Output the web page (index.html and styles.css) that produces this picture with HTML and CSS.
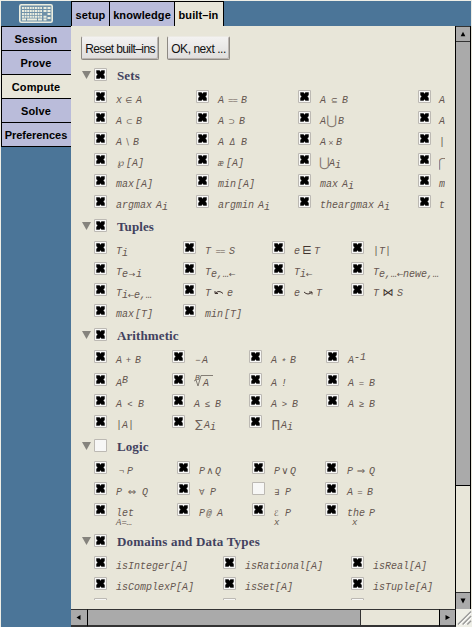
FILE: index.html
```html
<!DOCTYPE html>
<html lang="en">
<head>
<meta charset="utf-8">
<title>Built-ins</title>
<link rel="stylesheet" href="styles.css">
</head>
<body>
<svg class="defs" width="0" height="0"><defs>
<symbol id="x" viewBox="0 0 13 13"><path d="M2.500 2.500h3l1 1.500 1-1.500h3v2.500l-1.200 1.500 1.200 1.500v2.500h-3l-1-1.500-1 1.500h-3V8l1.200-1.500L2.500 5z" fill="#000" stroke="#000" stroke-width=".4"/></symbol>
</defs></svg>
<div class="window">
<header class="top">
<div class="logo"><svg width="34" height="19" viewBox="0 0 34 19"><rect x=".8" y=".8" width="32.4" height="17.4" rx="1.5" fill="#6f91a8" stroke="#eceee0" stroke-width="1.6"/><g stroke="#eceee0" stroke-width="2.100" fill="none"><path d="M3 4h20" stroke-dasharray="1.9 .7"/><path d="M3 7h20" stroke-dasharray="2 .6"/><path d="M3 10h20" stroke-dasharray="1.9 .7"/><path d="M3 12.800h20" stroke-dasharray="2 .6"/><path d="M3 15.500h4M8 15.500h10M19 15.500h4M24.500 15.500h3M24.500 12.800h3M24.500 7h3M24.500 4h3M28.500 4h3M28.500 7h3M28.500 10h3M28.500 14h3"/></g></svg></div>
<nav class="tabs"><a class="t1">setup</a><a class="t2">knowledge</a><a class="t3 on">built–in</a></nav>
</header>
<div class="main">
<nav class="side"><a>Session</a><a>Prove</a><a class="on">Compute</a><a>Solve</a><a>Preferences</a></nav>
<div class="pane">
<div class="row">
<div class="view">
<div class="buttons"><button class="b1">Reset built–ins</button><button class="b2">OK, next ...</button></div>

<section class="sets">
<h2><i class="tri"></i><svg class="cb"><use href="#x"/></svg>Sets</h2>
<div class="grid">
<div><svg class="cb"><use href="#x"/></svg><p>x<s class="w14">∈</s>A</p></div>
<div><svg class="cb"><use href="#x"/></svg><p>A<s class="w17 m eq">==</s>B</p></div>
<div><svg class="cb"><use href="#x"/></svg><p>A<s class="w16">⊆</s>B</p></div>
<div><svg class="cb"><use href="#x"/></svg><p>A</p></div>
<div><svg class="cb"><use href="#x"/></svg><p>A<s class="w14">⊂</s>B</p></div>
<div><svg class="cb"><use href="#x"/></svg><p>A<s class="w15">⊃</s>B</p></div>
<div><svg class="cb"><use href="#x"/></svg><p>A<s class="w13 big">⋃</s>B</p></div>
<div><svg class="cb"><use href="#x"/></svg><p>A</p></div>
<div><svg class="cb"><use href="#x"/></svg><p>A<s class="w11">\</s>B</p></div>
<div><svg class="cb"><use href="#x"/></svg><p>A<s class="w17 it">Δ</s>B</p></div>
<div><svg class="cb"><use href="#x"/></svg><p>A<s class="w10 sm">×</s>B</p></div>
<div><svg class="cb"><use href="#x"/></svg><p>|</p></div>
<div><svg class="cb"><use href="#x"/></svg><p><s class="w10 pow">℘</s>[A]</p></div>
<div><svg class="cb"><use href="#x"/></svg><p><s class="w8 m l">æ</s>[A]</p></div>
<div><svg class="cb"><use href="#x"/></svg><p><s class="w10 big">⋃</s>A<sub>i</sub></p></div>
<div><svg class="cb"><use href="#x"/></svg><p class="cut"><s class="big">⋂</s></p></div>
<div><svg class="cb"><use href="#x"/></svg><p>max<s class="g"></s>[A]</p></div>
<div><svg class="cb"><use href="#x"/></svg><p>min<s class="g"></s>[A]</p></div>
<div><svg class="cb"><use href="#x"/></svg><p>max<s class="w4"></s>A<sub>i</sub></p></div>
<div><svg class="cb"><use href="#x"/></svg><p>m</p></div>
<div><svg class="cb"><use href="#x"/></svg><p>argmax<s class="w4"></s>A<sub>i</sub></p></div>
<div><svg class="cb"><use href="#x"/></svg><p>argmin<s class="w4"></s>A<sub>i</sub></p></div>
<div><svg class="cb"><use href="#x"/></svg><p>theargmax<s class="w4"></s>A<sub>i</sub></p></div>
<div><svg class="cb"><use href="#x"/></svg><p>t</p></div>
</div></section>

<section class="tuples">
<h2><i class="tri"></i><svg class="cb"><use href="#x"/></svg>Tuples</h2>
<div class="grid">
<div><svg class="cb"><use href="#x"/></svg><p>T<sub>i</sub></p></div>
<div><svg class="cb"><use href="#x"/></svg><p>T<s class="w18 m eq">==</s>S</p></div>
<div><svg class="cb"><use href="#x"/></svg><p>e<s class="w14 dark">⋿</s>T</p></div>
<div><svg class="cb"><use href="#x"/></svg><p>|T|</p></div>
<div><svg class="cb"><use href="#x"/></svg><p>T<sub>e<s class="w8">→</s>i</sub></p></div>
<div><svg class="cb"><use href="#x"/></svg><p>T<sub>e,…<s class="w6">←</s></sub></p></div>
<div><svg class="cb"><use href="#x"/></svg><p>T<sub>i<s class="w6">←</s></sub></p></div>
<div><svg class="cb"><use href="#x"/></svg><p>T<sub>e,…<s class="w6">←</s>newe,…</sub></p></div>
<div><svg class="cb"><use href="#x"/></svg><p>T<sub>i<s class="w6">←</s>e,…</sub></p></div>
<div><svg class="cb"><use href="#x"/></svg><p>T<svg class="arc" viewBox="0 0 16 8"><path d="M4 4.500Q8 .5 12 4.500M4 2v2.500h3" fill="none" stroke="#403430"/></svg>e</p></div>
<div><svg class="cb"><use href="#x"/></svg><p>e<svg class="arc" viewBox="0 0 16 8"><path d="M4 3Q8 7 12 3M9 3h3v2.500" fill="none" stroke="#403430"/></svg>T</p></div>
<div><svg class="cb"><use href="#x"/></svg><p>T<s class="w18 dark">⋈</s>S</p></div>
<div><svg class="cb"><use href="#x"/></svg><p>max<s class="g"></s>[T]</p></div>
<div><svg class="cb"><use href="#x"/></svg><p>min<s class="g"></s>[T]</p></div>
</div></section>

<section class="arith">
<h2><i class="tri"></i><svg class="cb"><use href="#x"/></svg>Arithmetic</h2>
<div class="grid">
<div><svg class="cb"><use href="#x"/></svg><p>A<s class="w13 m">+</s>B</p></div>
<div><svg class="cb"><use href="#x"/></svg><p><s class="w8 m">−</s>A</p></div>
<div><svg class="cb"><use href="#x"/></svg><p>A<s class="w13 m star">*</s>B</p></div>
<div><svg class="cb"><use href="#x"/></svg><p>A<sup>-1</sup></p></div>
<div><svg class="cb"><use href="#x"/></svg><p>A<sup>B</sup></p></div>
<div><svg class="cb"><use href="#x"/></svg><p class="root"><svg width="19" height="13" viewBox="0 0 19 13"><path d="M0 7l2-1 2 6L7 1.500h12" fill="none" stroke="#77706a" stroke-width=".9"/></svg><b>B</b>A</p></div>
<div><svg class="cb"><use href="#x"/></svg><p>A<s class="w4"></s>!</p></div>
<div><svg class="cb"><use href="#x"/></svg><p>A<s class="w15 m">=</s>B</p></div>
<div><svg class="cb"><use href="#x"/></svg><p>A<s class="w16 m">&lt;</s>B</p></div>
<div><svg class="cb"><use href="#x"/></svg><p>A<s class="w15 m">≤</s>B</p></div>
<div><svg class="cb"><use href="#x"/></svg><p>A<s class="w15 m">&gt;</s>B</p></div>
<div><svg class="cb"><use href="#x"/></svg><p>A<s class="w15 m">≥</s>B</p></div>
<div><svg class="cb"><use href="#x"/></svg><p>|A|</p></div>
<div><svg class="cb"><use href="#x"/></svg><p><s class="w10 sum">∑</s>A<sub>i</sub></p></div>
<div><svg class="cb"><use href="#x"/></svg><p><s class="w10 sum">∏</s>A<sub>i</sub></p></div>
</div></section>

<section class="logic">
<h2><i class="tri"></i><svg class="cb"></svg>Logic</h2>
<div class="grid">
<div><svg class="cb"><use href="#x"/></svg><p><s class="w11 m">¬</s>P</p></div>
<div><svg class="cb"><use href="#x"/></svg><p>P<s class="w10 and">∧</s>Q</p></div>
<div><svg class="cb"><use href="#x"/></svg><p>P<s class="w10 and">∨</s>Q</p></div>
<div><svg class="cb"><use href="#x"/></svg><p>P<s class="w16 arr">⇒</s>Q</p></div>
<div><svg class="cb"><use href="#x"/></svg><p>P<s class="w20 arr">⇔</s>Q</p></div>
<div><svg class="cb"><use href="#x"/></svg><p><s class="w11 l it">∀</s>P</p></div>
<div><svg class="cb"></svg><p><s class="w11 l it">∃</s>P</p></div>
<div><svg class="cb"><use href="#x"/></svg><p>A<s class="w14 m">=</s>B</p></div>
<div><svg class="cb"><use href="#x"/></svg><p>let<small>A=…</small></p></div>
<div><svg class="cb"><use href="#x"/></svg><p>P<s class="w8 m">@</s><s class="w4"></s>A</p></div>
<div><svg class="cb"><use href="#x"/></svg><p><s class="w11 l it">ℰ</s>P<small>x</small></p></div>
<div><svg class="cb"><use href="#x"/></svg><p>the<s class="w4"></s>P<small class="in">x</small></p></div>
</div></section>

<section class="domains">
<h2><i class="tri"></i><svg class="cb"><use href="#x"/></svg>Domains and Data Types</h2>
<div class="grid">
<div><svg class="cb"><use href="#x"/></svg><p>isInteger[A]</p></div>
<div><svg class="cb"><use href="#x"/></svg><p>isRational[A]</p></div>
<div><svg class="cb"><use href="#x"/></svg><p>isReal[A]</p></div>
<div><svg class="cb"><use href="#x"/></svg><p>isComplexP[A]</p></div>
<div><svg class="cb"><use href="#x"/></svg><p>isSet[A]</p></div>
<div><svg class="cb"><use href="#x"/></svg><p>isTuple[A]</p></div>
<div><svg class="cb"></svg></div>
<div><svg class="cb"></svg></div>
<div><svg class="cb"></svg></div>
</div></section>
</div>
<div class="vbar"><svg class="up" viewBox="0 0 14 15"><path d="M7 5l2.500 5h-5z"/></svg><div class="vthumb"></div><div class="vtrack"></div><svg class="down" viewBox="0 0 14 15"><path d="M7 10L4.500 5h5z"/></svg></div>
</div>
<div class="hrow"><svg class="left" viewBox="0 0 16 15"><path d="M5.500 7.500l4-2.500v5z"/></svg><div class="hthumb"></div><div class="htrack"></div><svg class="right" viewBox="0 0 15 15"><path d="M10 7.500L5.500 5v5z"/></svg><svg class="grip" viewBox="0 0 17 18"><path d="M2 16L16 2M7 16l9-9M12 16l4-4" stroke="#999" stroke-width="1.500"/><path d="M3.500 16.500L16.500 3.500M8.500 16.500l8-8" stroke="#fff"/></svg></div>
</div>
</div>
</div>
</body>
</html>
```
FILE: styles.css
```css
* { box-sizing: border-box; }
body { margin: 0; width: 472px; height: 627px; overflow: hidden; background: #eeeee6; }
.defs { display: block; }
.window { margin: 1px 1px 0 1px; height: 626px; background: #4b7598; display: flex; flex-direction: column; }
.top { height: 25px; display: flex; flex: none; }
.logo { width: 70px; padding: 3px 0 0 18px; }
.logo svg { display: block; }
.tabs { display: flex; height: 25px; }
.tabs a, .side a { font: bold 11px/24px "Liberation Sans", sans-serif; letter-spacing: .1px; background: #babcda; color: #000; text-align: center; }
.tabs a { border: solid #000; border-width: 1px 0 0 1px; line-height: 27px; }
.t1 { width: 38px; }
.t2 { width: 65px; }
.tabs .t3 { width: 50px; border-right-width: 1px; padding-right: 1px; }
.tabs a.on, .side a.on { background: #e8e6d9; }
.main { display: flex; height: 601px; }
.side { width: 70px; height: 121px; border-left: 1px solid #000; border-bottom: 1px solid #000; }
.side a { display: block; height: 24px; border-top: 1px solid #000; white-space: nowrap; line-height: 25px; padding-right: 1px; }
.side a:last-child { letter-spacing: -.05px; }
.pane { width: 401px; background: #e8e6d9; display: flex; flex-direction: column; margin-right: -1px; }
.row { display: flex; height: 583px; }
.view { width: 374px; height: 574px; margin-right: 10px; padding: 10px 0 0 10px; overflow: hidden; }
.buttons { display: flex; gap: 8px; height: 32px; }
.buttons button { height: 24px; padding: 2px 0 0; font: 12px "Liberation Sans", sans-serif; letter-spacing: -.6px; color: #111; background: linear-gradient(#f3f2f1, #dfdddc); border: 1px solid #8d8983; border-top-color: #eceae4; border-radius: 2px; box-shadow: inset -1px -1px #bbb5b1; white-space: nowrap; }
.buttons .b1 { width: 78px; }
.buttons .b2 { width: 63px; letter-spacing: -.45px; }
section { width: 460px; margin-bottom: 3px; }
.logic { margin-bottom: 10px; }
h2 { margin: 0; height: 22px; display: flex; align-items: flex-start; font: bold 13px/16px "Liberation Serif", serif; letter-spacing: .1px; color: #42425f; white-space: nowrap; }
.domains h2 { letter-spacing: .2px; }
h2 .cb { margin-right: 10px; }
.tri { width: 9px; height: 8px; margin: 3px 3px 0 1px; background: #85837d; clip-path: polygon(0 0, 100% 0, 50% 100%); }
.cb { flex: none; display: block; width: 13px; height: 13px; background: #f7f7f6; border-radius: 1px; box-shadow: inset 0 0 0 1px #bcb9b3; }
.grid { display: grid; padding-left: 13px; grid-auto-rows: 21px; }
.sets .grid { grid-template-columns: 102px 102px 120px 100px; }
.tuples .grid { grid-template-columns: 89px 89px 79px 100px; }
.arith .grid { grid-template-columns: 78px 77px 77px 100px; grid-template-rows: 23px; }
.logic .grid { grid-template-columns: 83px 75px 73px 100px; }
.domains .grid { grid-template-columns: 129px 128px 100px; }
.grid > div { display: flex; min-width: 0; }
p { position: relative; margin: 5px 0 0 9px; height: 12px; white-space: nowrap; font: italic 10px/12px "Liberation Mono", "DejaVu Sans Mono", monospace; color: #655650; }
.sets .grid > div:nth-child(4n) p { margin-left: 8px; }
s { display: inline-block; text-decoration: none; text-align: center; font: normal 8px/10px "DejaVu Sans", sans-serif; }
.m { font: italic 9px/10px "Liberation Mono", monospace; }
.eq { letter-spacing: -1px; }
.big { font-size: 13px; color: #85786f; margin: 0 0 0 -1px; vertical-align: -1px; }
.sum { font-size: 11px; color: #6f625b; }
.pow, .and, .arr { font-size: 10px; }
.cut { width: 6px; overflow: hidden; }
.sm { font-size: 7px; }
.it { font-style: italic; }
.l { text-align: left; }
.dark { font-size: 11px; color: #403430; }
.star { vertical-align: -2px; }
.arc { display: inline-block; width: 16px; height: 8px; vertical-align: -1px; }
.g { width: 1px; }
.w4 { width: 4px; }
.w6 { width: 6px; }
.w8 { width: 8px; }
.w10 { width: 10px; }
.w11 { width: 11px; }
.w13 { width: 13px; }
.w14 { width: 14px; }
.w15 { width: 15px; }
.w16 { width: 16px; }
.w17 { width: 17px; }
.w18 { width: 18px; }
.w20 { width: 20px; }
sub, sup { font-size: 10px; line-height: 0; }
sub { vertical-align: -2px; }
sup { vertical-align: 3px; }
small { position: absolute; left: 0; top: 10px; font-size: 9px; line-height: 10px; }
.in { left: 5px; }
.root { padding-left: 9px; }
.root svg { position: absolute; left: 0; top: -4px; }
.root b { position: absolute; left: 1px; top: -6px; font-weight: normal; font-size: 8px; }
.vbar { width: 16px; height: 583px; border: solid #000; border-width: 0 1px; display: flex; flex-direction: column; }
.vbar svg, .hrow svg { display: block; flex: none; }
.up { height: 16px; background: #aaa; border-top: 1px solid #333; border-bottom: 1px solid #333; }
.vthumb { height: 444px; background: #aaa; border-bottom: 1px solid #000; }
.vtrack { flex: 1; }
.down { height: 17px; background: #aaa; border-top: 1px solid #333; }
.hrow { display: flex; height: 18px; }
.hrow > * { border: solid #333; border-width: 1px 0 2px; height: 18px; }
.left { width: 17px; background: #aaa; }
.hrow .left { border-right: 1px solid #000; }
.hthumb { width: 273px; background: #aaa; }
.hrow .hthumb { border-right: 1px solid #333; }
.htrack { width: 78px; }
.right { width: 17px; background: #aaa; }
.hrow .right { border-left: 1px solid #000; border-right: 1px solid #000; }
.hrow .grip { border: 0; width: 16px; background: #eeeee6; }
```
